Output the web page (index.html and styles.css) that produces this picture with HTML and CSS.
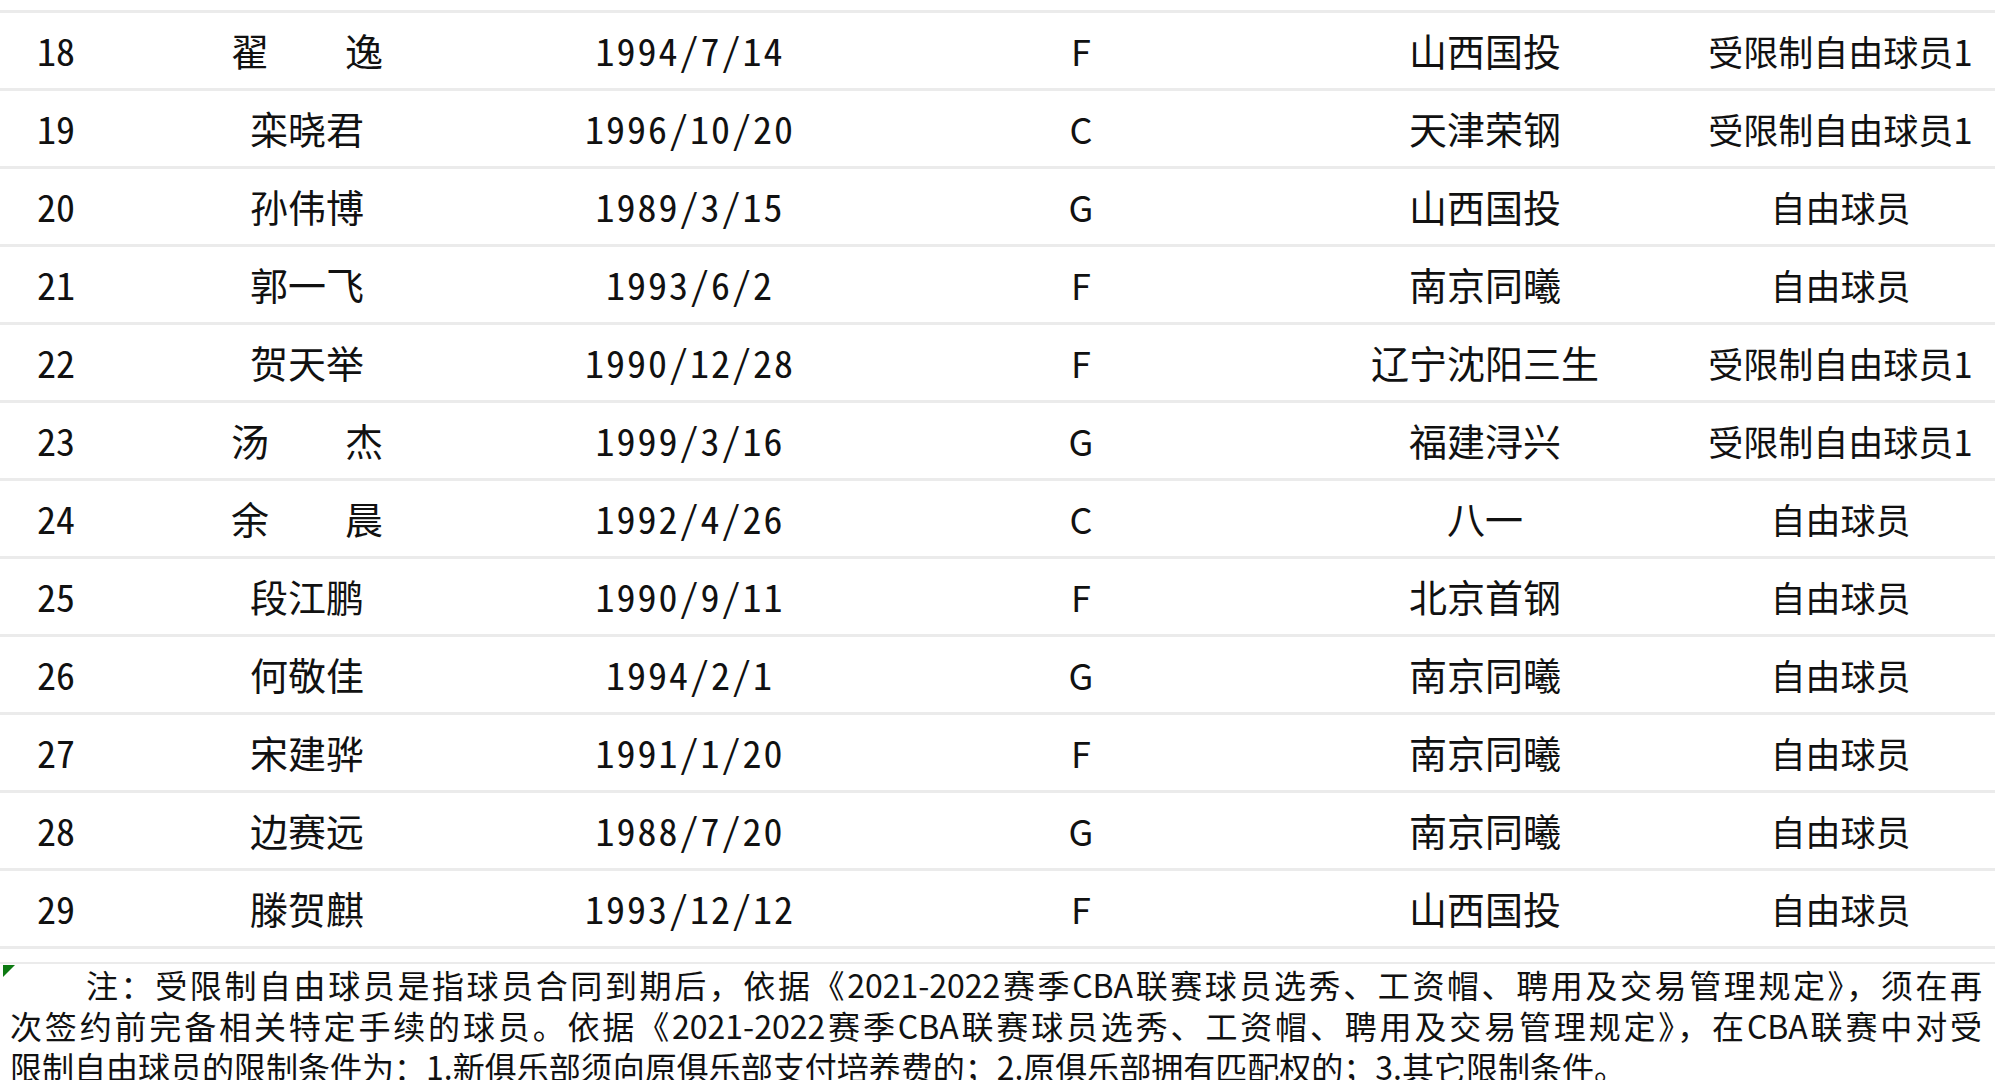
FILE: index.html
```html
<!DOCTYPE html>
<html lang="zh-CN">
<head>
<meta charset="utf-8">
<title>球员名单</title>
<link rel="stylesheet" href="styles.css">
</head>
<body>
<div class="sheet">
  <div class="top-strip"></div>
  <div class="row"><div class="c no">18</div><div class="c name">翟　　逸</div><div class="c date">1994/7/14</div><div class="c pos">F</div><div class="c team">山西国投</div><div class="c status">受限制自由球员1</div></div>
  <div class="row"><div class="c no">19</div><div class="c name">栾晓君</div><div class="c date">1996/10/20</div><div class="c pos">C</div><div class="c team">天津荣钢</div><div class="c status">受限制自由球员1</div></div>
  <div class="row"><div class="c no">20</div><div class="c name">孙伟博</div><div class="c date">1989/3/15</div><div class="c pos">G</div><div class="c team">山西国投</div><div class="c status">自由球员</div></div>
  <div class="row"><div class="c no">21</div><div class="c name">郭一飞</div><div class="c date">1993/6/2</div><div class="c pos">F</div><div class="c team">南京同曦</div><div class="c status">自由球员</div></div>
  <div class="row"><div class="c no">22</div><div class="c name">贺天举</div><div class="c date">1990/12/28</div><div class="c pos">F</div><div class="c team">辽宁沈阳三生</div><div class="c status">受限制自由球员1</div></div>
  <div class="row"><div class="c no">23</div><div class="c name">汤　　杰</div><div class="c date">1999/3/16</div><div class="c pos">G</div><div class="c team">福建浔兴</div><div class="c status">受限制自由球员1</div></div>
  <div class="row"><div class="c no">24</div><div class="c name">余　　晨</div><div class="c date">1992/4/26</div><div class="c pos">C</div><div class="c team">八一</div><div class="c status">自由球员</div></div>
  <div class="row"><div class="c no">25</div><div class="c name">段江鹏</div><div class="c date">1990/9/11</div><div class="c pos">F</div><div class="c team">北京首钢</div><div class="c status">自由球员</div></div>
  <div class="row"><div class="c no">26</div><div class="c name">何敬佳</div><div class="c date">1994/2/1</div><div class="c pos">G</div><div class="c team">南京同曦</div><div class="c status">自由球员</div></div>
  <div class="row"><div class="c no">27</div><div class="c name">宋建骅</div><div class="c date">1991/1/20</div><div class="c pos">F</div><div class="c team">南京同曦</div><div class="c status">自由球员</div></div>
  <div class="row"><div class="c no">28</div><div class="c name">边赛远</div><div class="c date">1988/7/20</div><div class="c pos">G</div><div class="c team">南京同曦</div><div class="c status">自由球员</div></div>
  <div class="row"><div class="c no">29</div><div class="c name">滕贺麒</div><div class="c date">1993/12/12</div><div class="c pos">F</div><div class="c team">山西国投</div><div class="c status">自由球员</div></div>
  <div class="note">
    <span class="marker"></span>
    <p class="line first">注：受限制自由球员是指球员合同到期后，依据《2021-2022赛季CBA联赛球员选秀、工资帽、聘用及交易管理规定》，须在再</p>
    <p class="line">次签约前完备相关特定手续的球员。依据《2021-2022赛季CBA联赛球员选秀、工资帽、聘用及交易管理规定》，在CBA联赛中对受</p>
    <p class="line last">限制自由球员的限制条件为：1.新俱乐部须向原俱乐部支付培养费的；2.原俱乐部拥有匹配权的；3.其它限制条件。</p>
  </div>
</div>
</body>
</html>
```

FILE: styles.css
```css
* { box-sizing: border-box; }
html, body {
  margin: 0;
  padding: 0;
  background: #ffffff;
}
body {
  width: 1995px;
  height: 1080px;
  overflow: hidden;
  font-family: "Noto Sans CJK SC", "Noto Sans", sans-serif;
  color: #111111;
}
.sheet {
  display: flex;
  flex-direction: column;
}
.top-strip {
  height: 13px;
  border-bottom: 3px solid #ebebeb;
}
.row {
  display: grid;
  grid-template-columns: 110px 394px 372px 410px 398px 311px;
  height: 78px;
  border-bottom: 3px solid #ebebeb;
}
.c {
  display: flex;
  align-items: center;
  justify-content: center;
  font-size: 38px;
  line-height: 1;
  white-space: nowrap;
  padding-bottom: 1px;
}
.no, .date {
  font-feature-settings: "hwid" 1;
  letter-spacing: 2px;
}
.no { letter-spacing: 0; padding-left: 2px; }
.pos { font-size: 36px; }
.status { font-size: 35px; padding-left: 2px; }
.note {
  position: relative;
  margin-top: 13px;
  border-top: 2px solid #ebebeb;
  padding: 0 13px 0 10px;
  font-size: 32px;
  line-height: 41px;
  color: #111111;
}
.marker {
  position: absolute;
  left: 3px;
  top: 1px;
  width: 0;
  height: 0;
  border-top: 12px solid #0d7a12;
  border-right: 12px solid transparent;
}
.line {
  margin: 0;
  white-space: nowrap;
  text-align: justify;
  text-align-last: justify;
}
.line.first { text-indent: 76px; }
.line.last { text-align-last: left; }
```
